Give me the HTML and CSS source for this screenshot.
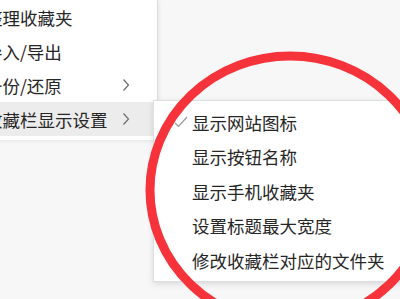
FILE: index.html
```html
<!DOCTYPE html>
<html>
<head>
<meta charset='utf-8'/>
<link rel="stylesheet" href="styles.css">
</head>
<body>
<div id='stage'>
<div class='menu'>
<div class='item'><span>整理收藏夹</span></div>
<div class='item'><span>导入/导出</span></div>
<div class='item'><span>备份/还原</span><span class='arrow'>
<svg width='8' height='14' viewBox='0 0 8 14'><path d='M1.5 1.5 L6.5 7 L1.5 12.5' fill='none' stroke='#6b6b6b' stroke-width='1.2'/></svg></span></div>
<div class='item hover'><span>收藏栏显示设置</span><span class='arrow'>
<svg width='8' height='14' viewBox='0 0 8 14'><path d='M1.5 1.5 L6.5 7 L1.5 12.5' fill='none' stroke='#6b6b6b' stroke-width='1.2'/></svg></span></div>
</div>
<div class='submenu'>
<div class='subitem'><span class='check'>
<svg width='14' height='12' viewBox='0 0 14 12'><path d='M1 7 L4.5 10.5 L13 1' fill='none' stroke='#9a9a9a' stroke-width='1.2'/></svg></span><span>显示网站图标</span></div>
<div class='subitem'><span class='check'></span><span>显示按钮名称</span></div>
<div class='subitem'><span class='check'></span><span>显示手机收藏夹</span></div>
<div class='subitem'><span class='check'></span><span>设置标题最大宽度</span></div>
<div class='subitem'><span class='check'></span><span>修改收藏栏对应的文件夹</span></div>
</div>
</div>
<svg class='mark' width='400' height='299' viewBox='0 0 400 299'>
<ellipse cx='290' cy='190' rx='140' ry='134' fill='none' stroke='#f6333b' stroke-width='9'/>
</svg>
</body>
</html>
```
FILE: styles.css
```css
html, body {
    margin: 0;
    padding: 0;
}
body {
    width: 400px;
    height: 299px;
    overflow: hidden;
    position: relative;
    background: #f7f7f7;
    font-family: "Noto Sans CJK SC", "Noto Sans", sans-serif;
    font-size: 17.5px;
    color: #262626;
}
div#stage {
    display: flex;
    align-items: flex-start;
}
div.menu {
    margin-left: -45px;
    width: 202px;
    flex: none;
    background: #fff;
    border-right: 1px solid #dcdcdc;
    box-shadow: 1px 1px 4px rgba(0,0,0,0.08);
    padding-bottom: 4px;
}
div.item {
    height: 34px;
    display: flex;
    align-items: center;
    justify-content: space-between;
    padding-left: 30px;
    padding-right: 27px;
    white-space: nowrap;
}
div.item.hover {
    background: #ececec;
}
span.arrow {
    display: flex;
    align-items: center;
}
div.submenu {
    margin-top: 100px;
    margin-left: -5px;
    width: 260px;
    flex: none;
    background: #fff;
    border: 1px solid #dedede;
    box-shadow: 0 2px 6px rgba(0,0,0,0.12);
    padding: 4px 0 3px 0;
    position: relative;
}
div.subitem {
    height: 34.5px;
    display: flex;
    align-items: center;
    padding-left: 20px;
    white-space: nowrap;
}
span.check {
    width: 18px;
    display: flex;
    align-items: center;
}
svg.mark {
    position: absolute;
    left: 0;
    top: 0;
    pointer-events: none;
}
```
